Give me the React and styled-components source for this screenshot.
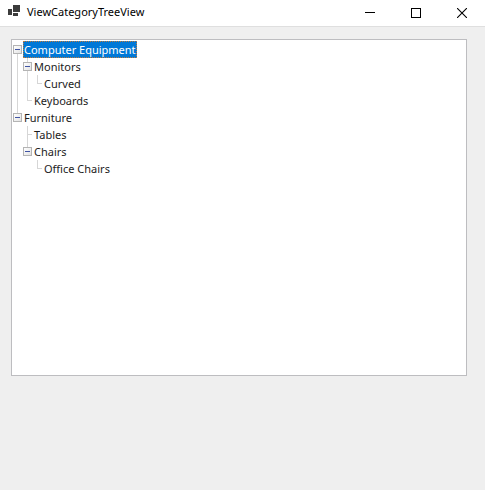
import React, { useState } from "react";
import styled, { createGlobalStyle } from "styled-components";

const GlobalStyle = createGlobalStyle`
  * { box-sizing: border-box; }
  body {
    margin: 0;
    background: #efefef;
    font-family: "Noto Sans", "Open Sans", sans-serif;
    font-size: 11px;
    color: #1c1c1c;
  }
`;

const Window = styled.div`
  display: flex;
  flex-direction: column;
  min-height: 100vh;
`;

const TitleBar = styled.header`
  display: flex;
  align-items: center;
  height: 27px;
  padding-left: 8px;
  background: #fff;
  border-bottom: 1px solid #dfdfdf;
`;

const AppIcon = styled.svg`
  flex: none;
  margin: 0 7px 4px 0;
`;

const Title = styled.h1`
  flex: 1;
  margin: 0;
  font-size: 11px;
  line-height: 24px;
  height: 26px;
  font-weight: 400;
  color: #000;
  white-space: nowrap;
`;

const CaptionButton = styled.button`
  display: flex;
  align-items: center;
  justify-content: center;
  width: 46px;
  height: 26px;
  padding: 0;
  border: 0;
  background: none;
  color: #000;
`;

const Content = styled.main`
  padding: 12px 18px 12px 11px;
`;

const TreePanel = styled.section`
  min-height: 337px;
  padding: 1px;
  background: #fff;
  border: 1px solid #bdbdc0;
`;

const Branch = styled.ul`
  list-style: none;
  margin: 0;
  padding: 0 0 0 ${(p) => (p.$nested ? 10 : 0)}px;
`;

const Node = styled.li`
  position: relative;

  &::before {
    content: "";
    position: absolute;
    left: 4px;
    top: ${(p) => (p.$start ? 9 : 0)}px;
    ${(p) => (p.$last ? "height: 9px;" : "bottom: 0;")}
    border-left: 1px solid #d6d6d6;
  }

  &::after {
    content: "";
    position: absolute;
    left: 4px;
    top: 8px;
    width: 5px;
    border-top: 1px solid #d6d6d6;
  }
`;

const Row = styled.div`
  position: relative;
  z-index: 1;
  display: flex;
  align-items: center;
  height: 17px;
`;

const Gutter = styled.span`
  display: flex;
  flex: none;
  width: 10px;
`;

const Toggle = styled.button`
  display: flex;
  width: 9px;
  height: 9px;
  padding: 0;
  border: 1px solid #b4b4b4;
  background: linear-gradient(135deg, #fff, #e2e2e2);
  color: #4054a4;
`;

const Label = styled.button`
  height: 17px;
  padding: 0 1px;
  border: 0;
  font: inherit;
  line-height: 17px;
  white-space: nowrap;
  color: ${(p) => (p.$selected ? "#fff" : "inherit")};
  background: ${(p) => (p.$selected ? "#0078d7" : "none")};
  outline: ${(p) => (p.$selected ? "1px dotted #bf7b3c" : "none")};
  outline-offset: -1px;
`;

const categories = [
  {
    name: "Computer Equipment",
    children: [
      { name: "Monitors", children: [{ name: "Curved" }] },
      { name: "Keyboards" },
    ],
  },
  {
    name: "Furniture",
    children: [
      { name: "Tables" },
      { name: "Chairs", children: [{ name: "Office Chairs" }] },
    ],
  },
];

function TreeNode({ item, start, last, selected, onSelect }) {
  const [open, setOpen] = useState(true);
  return (
    <Node
      role="treeitem"
      aria-expanded={item.children ? open : undefined}
      aria-selected={selected === item.name}
      $start={start}
      $last={last}
    >
      <Row>
        <Gutter>
          {item.children && (
            <Toggle
              aria-label={`${open ? "Collapse" : "Expand"} ${item.name}`}
              onClick={() => setOpen(!open)}
            >
              <svg width="7" height="7" viewBox="0 0 7 7" shapeRendering="crispEdges">
                <path d={open ? "M1 3.5H6" : "M1 3.5H6M3.5 1V6"} stroke="currentColor" />
              </svg>
            </Toggle>
          )}
        </Gutter>
        <Label $selected={selected === item.name} onClick={() => onSelect(item.name)}>
          {item.name}
        </Label>
      </Row>
      {item.children && open && (
        <Branch role="group" $nested>
          {item.children.map((child, i) => (
            <TreeNode
              key={child.name}
              item={child}
              last={i === item.children.length - 1}
              selected={selected}
              onSelect={onSelect}
            />
          ))}
        </Branch>
      )}
    </Node>
  );
}

export default function App() {
  const [selected, setSelected] = useState("Computer Equipment");
  return (
    <Window>
      <GlobalStyle />
      <TitleBar>
        <AppIcon width="12" height="12" viewBox="0 0 12 12" fill="#3c3c3c" shapeRendering="crispEdges" aria-hidden="true">
          <path d="M0 4h4v6H0zM5 0h7v7H5zM5 8h5v3H5z" />
        </AppIcon>
        <Title>ViewCategoryTreeView</Title>
        <CaptionButton aria-label="Minimize">
          <svg width="10" height="10" viewBox="0 0 10 10" shapeRendering="crispEdges">
            <path d="M0 4.5H10" stroke="currentColor" />
          </svg>
        </CaptionButton>
        <CaptionButton aria-label="Maximize">
          <svg width="10" height="10" viewBox="0 0 10 10" shapeRendering="crispEdges">
            <path d="M.5 .5H9.5V9.5H.5Z" fill="none" stroke="currentColor" />
          </svg>
        </CaptionButton>
        <CaptionButton aria-label="Close">
          <svg width="10" height="10" viewBox="0 0 10 10">
            <path d="M0 0L10 10M10 0L0 10" stroke="currentColor" strokeWidth="1.1" />
          </svg>
        </CaptionButton>
      </TitleBar>
      <Content>
        <TreePanel>
          <Branch role="tree" aria-label="Categories">
            {categories.map((item, i) => (
              <TreeNode
                key={item.name}
                item={item}
                start={i === 0}
                last={i === categories.length - 1}
                selected={selected}
                onSelect={setSelected}
              />
            ))}
          </Branch>
        </TreePanel>
      </Content>
    </Window>
  );
}
